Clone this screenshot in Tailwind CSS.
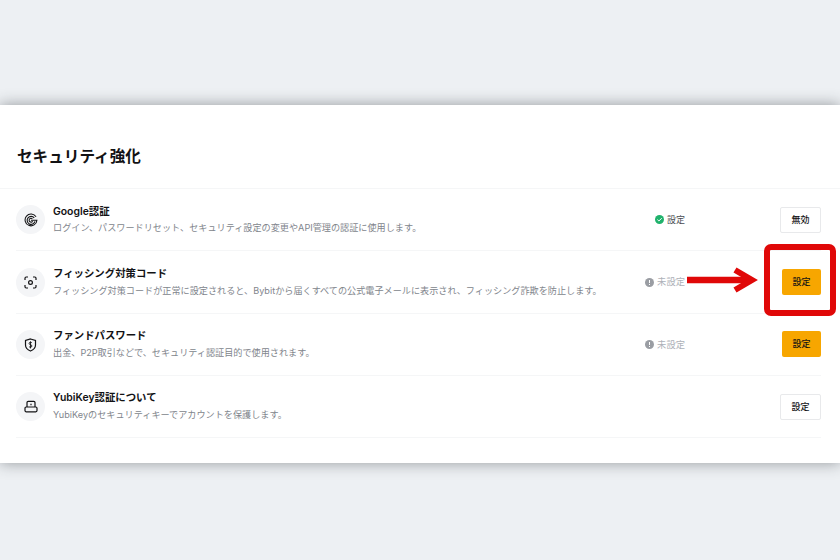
<!DOCTYPE html>
<html lang="ja">
  <head>
    <meta charset="UTF-8" />
    <title>セキュリティ強化</title>
    <script src="https://cdn.jsdelivr.net/npm/@tailwindcss/browser@4"></script>
  </head>
  <body class="bg-[#edf0f3] h-[560px] w-[840px] overflow-hidden font-['Inter','Noto_Sans_CJK_JP',sans-serif]">
    <div class="relative mt-[105px] h-[358px] bg-white shadow-[0_0_14px_rgba(40,45,50,0.45)]">
      <h1 class="h-[83px] pl-[17px] pt-[40px] text-[15.6px] leading-[24px] font-bold text-[#121214]">セキュリティ強化</h1>

      <div class="border-t border-[#f5f6f7]">
        <!-- Google -->
        <div class="ml-[16px] w-[805px] h-[62px] flex items-center border-b border-[#f5f6f7]">
          <div class="w-[29px] h-[29px] rounded-full bg-[#f4f5f7] flex items-center justify-center shrink-0">
            <svg width="14" height="14" viewBox="0 0 13 13" fill="none" stroke="#121214" stroke-width="1"><path d="M11.200 3.500A5.500 5.500 0 1 0 12 6.800H6.500" /><path d="M9.500 4.500A3.700 3.700 0 1 0 10.200 7.800" /><path d="M7.800 5.400A1.800 1.800 0 1 0 8.100 7.600" /></svg>
          </div>
          <div class="ml-[8px] flex-1">
            <div class="text-[10.4px] leading-[14px] font-semibold text-[#121214]">Google認証</div>
            <div class="mt-[2px] text-[9.15px] leading-[14px] text-[#81858c]">ログイン、パスワードリセット、セキュリティ設定の変更やAPI管理の認証に使用します。</div>
          </div>
          <div class="flex items-center gap-[3px] mr-[95px] text-[9px] text-[#4a4d52]">
            <svg width="9" height="9" viewBox="0 0 9 9"><circle cx="4.500" cy="4.500" r="4.500" fill="#20b26c" /><path d="M2.400 4.600l1.500 1.400 2.800-2.800" fill="none" stroke="#fff" stroke-width="1" /></svg>
            設定
          </div>
          <div class="w-[41px] h-[26px] rounded-[2px] border border-[#e8e9eb] bg-white flex items-center justify-center text-[9px] font-medium text-[#121214]">無効</div>
        </div>

        <!-- Phishing code -->
        <div class="ml-[16px] w-[805px] h-[63px] flex items-center border-b border-[#f5f6f7]">
          <div class="w-[29px] h-[29px] rounded-full bg-[#f4f5f7] flex items-center justify-center shrink-0">
            <svg width="13" height="13" viewBox="0 0 13 13" fill="none" stroke="#121214" stroke-width="1.2"><path d="M1 4V2.200Q1 1 2.200 1H4M9 1h1.800Q12 1 12 2.200V4M12 9v1.800Q12 12 10.800 12H9M4 12H2.200Q1 12 1 10.800V9" /><circle cx="6.500" cy="6.500" r="1.900" /></svg>
          </div>
          <div class="ml-[8px] flex-1">
            <div class="text-[10.4px] leading-[14px] font-semibold text-[#121214]">フィッシング対策コード</div>
            <div class="mt-[3px] text-[9.15px] leading-[14px] text-[#81858c]">フィッシング対策コードが正常に設定されると、Bybitから届くすべての公式電子メールに表示され、フィッシング詐欺を防止します。</div>
          </div>
          <div class="flex items-center gap-[3px] mr-[95px] text-[9.300px] text-[#adb1b8]">
            <svg width="9" height="9" viewBox="0 0 9 9"><circle cx="4.500" cy="4.500" r="4.500" fill="#9a9da3" /><path d="M4.500 2v3M4.500 6v1" stroke="#fff" stroke-width="1" /></svg>
            未設定
          </div>
          <div class="w-[41px] flex justify-end"><div class="w-[39px] h-[26px] rounded-[2px] bg-[#f7a600] flex items-center justify-center text-[9px] font-medium text-[#121214]">設定</div></div>
        </div>

        <!-- Fund password -->
        <div class="ml-[16px] w-[805px] h-[62px] flex items-center border-b border-[#f5f6f7]">
          <div class="w-[29px] h-[29px] rounded-full bg-[#f4f5f7] flex items-center justify-center shrink-0">
            <svg width="13" height="14" viewBox="0 0 13 14" fill="none" stroke="#121214" stroke-width="1.2"><path d="M6.500 1l5 1.500v4.500c0 2.900-2.200 4.900-5 6-2.800-1.100-5-3.100-5-6v-4.500z" /><path d="M8 5Q7.500 4.300 6.500 4.300 5.100 4.300 5.100 5.400t1.400 1.300 1.400 1.300-1.400 1.200Q5.500 9.200 5 8.500M6.500 3.400v7" stroke-width="0.9" /></svg>
          </div>
          <div class="ml-[8px] flex-1">
            <div class="text-[10.4px] leading-[14px] font-semibold text-[#121214]">ファンドパスワード</div>
            <div class="mt-[3px] text-[9.15px] leading-[14px] text-[#81858c]">出金、P2P取引などで、セキュリティ認証目的で使用されます。</div>
          </div>
          <div class="flex items-center gap-[3px] mr-[95px] text-[9.300px] text-[#adb1b8]">
            <svg width="9" height="9" viewBox="0 0 9 9"><circle cx="4.500" cy="4.500" r="4.500" fill="#9a9da3" /><path d="M4.500 2v3M4.500 6v1" stroke="#fff" stroke-width="1" /></svg>
            未設定
          </div>
          <div class="w-[41px] flex justify-end -mt-[1px]"><div class="w-[39px] h-[26px] rounded-[2px] bg-[#f7a600] flex items-center justify-center text-[9px] font-medium text-[#121214]">設定</div></div>
        </div>

        <!-- YubiKey -->
        <div class="ml-[16px] w-[805px] h-[62px] flex items-center border-b border-[#f5f6f7]">
          <div class="w-[29px] h-[29px] rounded-full bg-[#f4f5f7] flex items-center justify-center shrink-0">
            <svg width="14" height="13" viewBox="0 0 14 13" fill="none" stroke="#121214" stroke-width="1.2"><path d="M3 7V2.500Q3 1.300 4.200 1.300H9.800Q11 1.300 11 2.500V7" /><rect x="1" y="7" width="12" height="4.800" rx="1.200" /><path d="M7 3.800v1.400" /></svg>
          </div>
          <div class="ml-[8px] flex-1">
            <div class="text-[10.4px] leading-[14px] font-semibold text-[#121214]">YubiKey認証について</div>
            <div class="mt-[3px] text-[9.15px] leading-[14px] text-[#81858c]">YubiKeyのセキュリティキーでアカウントを保護します。</div>
          </div>
          <div class="w-[41px] h-[26px] rounded-[2px] border border-[#e8e9eb] bg-white flex items-center justify-center text-[9px] font-medium text-[#121214]">設定</div>
        </div>
      </div>

      <!-- red annotation over the row -->
      <div class="absolute left-[764px] top-[139px] w-[72px] h-[72px] border-[6px] border-[#e00808] rounded-[7px]"></div>
      <svg class="absolute left-[686px] top-[159px]" width="74" height="32" viewBox="0 0 74 32" fill="none" stroke="#e00808"><path d="M1 16H64" stroke-width="6.500" /><path d="M49 6L66 16L49 26" stroke-width="6" /></svg>
    </div>
  </body>
</html>
